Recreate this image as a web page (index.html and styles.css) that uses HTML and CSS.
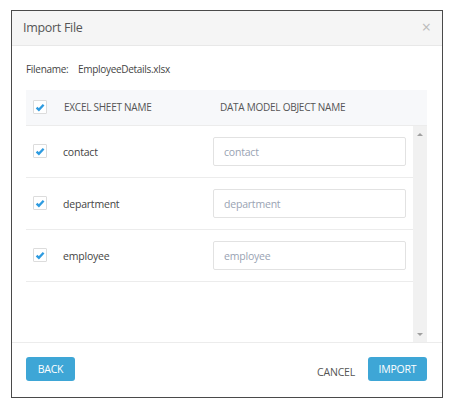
FILE: index.html
```html
<!DOCTYPE html>
<html>
<head>
<meta charset="utf-8">
<link rel="stylesheet" href="styles.css">
</head>
<body>
<div class="dialog">
  <div class="dlg-header">
    <span class="title">Import File</span>
    <span class="close">&#215;</span>
  </div>
  <div class="dlg-body">
    <div class="filename"><span class="fn-label">Filename:</span><span class="fn-value">EmployeeDetails.xlsx</span></div>
    <div class="thead">
      <span class="cb"><svg viewBox="0 0 13 13" width="13" height="13"><path d="M2.8 6.6 L5.3 9.1 L10.4 3.6" fill="none" stroke="#2e9be0" stroke-width="2.5"/></svg></span>
      <span class="col-sheet">EXCEL SHEET NAME</span>
      <span class="col-model">DATA MODEL OBJECT NAME</span>
    </div>
    <div class="scroll">
      <div class="rows">
        <div class="row">
          <span class="cb"><svg viewBox="0 0 13 13" width="13" height="13"><path d="M2.8 6.6 L5.3 9.1 L10.4 3.6" fill="none" stroke="#2e9be0" stroke-width="2.5"/></svg></span>
          <span class="sheet">contact</span>
          <input class="model" type="text" placeholder="contact">
        </div>
        <div class="row">
          <span class="cb"><svg viewBox="0 0 13 13" width="13" height="13"><path d="M2.8 6.6 L5.3 9.1 L10.4 3.6" fill="none" stroke="#2e9be0" stroke-width="2.5"/></svg></span>
          <span class="sheet">department</span>
          <input class="model" type="text" placeholder="department">
        </div>
        <div class="row">
          <span class="cb"><svg viewBox="0 0 13 13" width="13" height="13"><path d="M2.8 6.6 L5.3 9.1 L10.4 3.6" fill="none" stroke="#2e9be0" stroke-width="2.5"/></svg></span>
          <span class="sheet">employee</span>
          <input class="model" type="text" placeholder="employee">
        </div>
      </div>
      <div class="scrollbar">
        <span class="arrow up"></span>
        <span class="arrow down"></span>
      </div>
    </div>
  </div>
  <div class="dlg-footer">
    <button class="btn primary back">BACK</button>
    <span class="spacer"></span>
    <button class="btn link">CANCEL</button>
    <button class="btn primary import">IMPORT</button>
  </div>
</div>
</body>
</html>
```
FILE: styles.css
```css
* { box-sizing: border-box; }
body {
  margin: 0;
  background: #fff;
  font-family: "Open Sans", "Noto Sans", sans-serif;
  color: #444;
}
.dialog {
  margin: 10px 0 0 11px;
  width: 432px;
  height: 388px;
  border: 1px solid #4a4a4a;
  display: flex;
  flex-direction: column;
  background: #fff;
}
.dlg-header {
  height: 35px;
  background: #f5f5f5;
  border-bottom: 1px solid #e8e8e8;
  display: flex;
  align-items: center;
  justify-content: space-between;
  padding: 0 11px 1px 11px;
}
.title {
  font-size: 12.5px;
  color: #555;
  letter-spacing: -0.3px;
}
.close {
  font-size: 16px;
  color: #bbb;
  line-height: 1;
}
.dlg-body {
  padding: 15px 15px 0 14px;
  flex: 1;
  display: flex;
  flex-direction: column;
}
.filename {
  font-size: 10px;
  color: #444;
  height: 29px;
  line-height: 16px;
  letter-spacing: -0.3px;
}
.fn-label { display: inline-block; width: 52px; }
.thead {
  height: 36px;
  background: #f7f8fa;
  border-bottom: 1px solid #ececec;
  display: flex;
  align-items: center;
  padding-left: 7px;
  font-size: 10px;
  color: #555;
  letter-spacing: -0.25px;
}
.cb {
  width: 14px;
  height: 14px;
  border: 1px solid #dcdcdc;
  background: #fff;
  border-radius: 1px;
  display: inline-flex;
  align-items: center;
  justify-content: center;
  flex: none;
}
.cb svg { display: block; }
.col-sheet { margin-left: 17px; width: 156px; }
.scroll {
  height: 217px;
  display: flex;
  border-bottom: 1px solid #ececec;
  margin: 0 -15px 0 -14px;
  padding: 0 15px 0 14px;
}
.rows { flex: 1; }
.row {
  height: 52px;
  border-bottom: 1px solid #ececec;
  display: flex;
  align-items: center;
  padding-left: 7px;
  font-size: 10.5px;
  color: #444;
  letter-spacing: -0.2px;
}
.sheet { margin-left: 16px; width: 150px; padding-top: 1px; }
.model {
  width: 193px;
  height: 29px;
  border: 1px solid #e2e2e2;
  border-radius: 2px;
  padding: 0 10px;
  font-family: inherit;
  font-size: 10.5px;
  letter-spacing: -0.2px;
  outline: none;
  margin-top: 1px;
}
.model::placeholder { color: #99a3b3; }
.scrollbar {
  width: 14px;
  background: #f1f1f1;
  display: flex;
  flex-direction: column;
  justify-content: space-between;
  align-items: center;
  padding: 7px 0 6px;
}
.arrow {
  width: 0;
  height: 0;
  border-left: 3px solid transparent;
  border-right: 3px solid transparent;
}
.arrow.up { border-bottom: 3px solid #a0a0a0; }
.arrow.down { border-top: 3px solid #a0a0a0; }
.dlg-footer {
  height: 55px;
  display: flex;
  align-items: flex-start;
  padding: 14px 15px 0 14px;
}
.spacer { flex: 1; }
.btn {
  font-family: inherit;
  font-size: 10.5px;
  letter-spacing: -0.2px;
  height: 24px;
  border: none;
  border-radius: 3px;
  cursor: pointer;
  padding: 0;
}
.btn.primary {
  background: #3ea6d6;
  color: #fff;
}
.btn.back { width: 49px; }
.btn.import { width: 59px; }
.btn.link {
  background: none;
  color: #555;
  margin-right: 13px;
  margin-top: 3px;
}
```
